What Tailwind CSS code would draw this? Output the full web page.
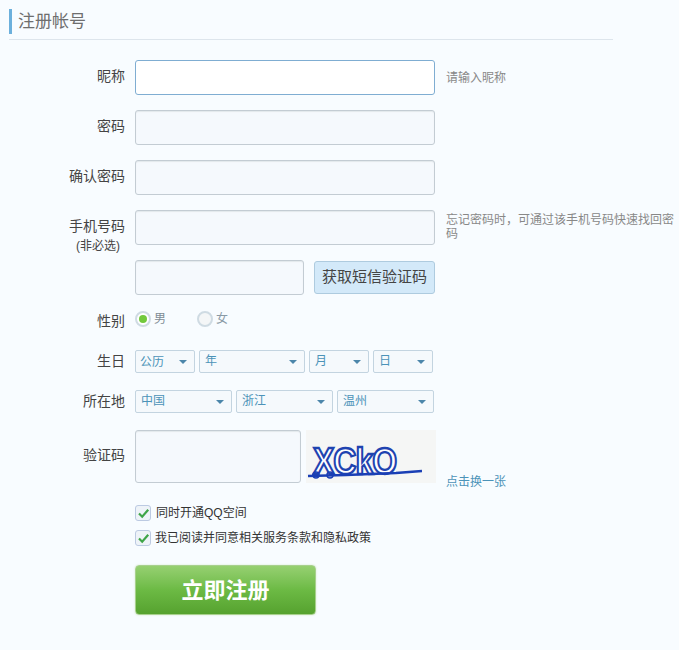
<!DOCTYPE html>
<html lang="zh-CN">
<head>
  <meta charset="UTF-8" />
  <title>注册帐号</title>
  <script src="https://cdn.jsdelivr.net/npm/@tailwindcss/browser@4"></script>
</head>
<body class="bg-[#f8fcff] w-[679px] h-[650px] overflow-hidden font-['Liberation_Sans','Noto_Sans_CJK_SC',sans-serif] text-[#444]">
  <div class="pt-[9px] pl-[9px] w-[613px]">
    <div class="border-l-[3px] border-[#6cb0dc] h-[25px] pl-[6px] text-[17px] leading-[25px] text-[#6e6e6e]">注册帐号</div>
    <div class="mt-[5px] h-px bg-[#dde5ec]"></div>
  </div>

  <div class="mt-[20px] flex flex-col">
    <!-- nickname -->
    <div class="flex h-[35px]">
      <label class="w-[125px] text-right text-[14px] leading-[33px] text-[#444]">昵称</label>
      <div class="ml-[10px] w-[300px] h-[35px] rounded-[3px] border border-[#7fadd2] bg-white"></div>
      <p class="ml-[11px] text-[12px] leading-[37px] text-[#888]">请输入昵称</p>
    </div>
    <div class="flex h-[35px] mt-[15px]">
      <label class="w-[125px] text-right text-[14px] leading-[33px]">密码</label>
      <div class="ml-[10px] w-[300px] h-[35px] rounded-[3px] border border-[#c3ccd3] bg-[#f5f9fd] shadow-[inset_0_1px_1px_#e3e8ec]"></div>
    </div>
    <div class="flex h-[35px] mt-[15px]">
      <label class="w-[125px] text-right text-[14px] leading-[33px]">确认密码</label>
      <div class="ml-[10px] w-[300px] h-[35px] rounded-[3px] border border-[#c3ccd3] bg-[#f5f9fd] shadow-[inset_0_1px_1px_#e3e8ec]"></div>
    </div>
    <!-- phone -->
    <div class="flex h-[35px] mt-[15px]">
      <div class="w-[125px] text-right">
        <div class="text-[14px] leading-[33px]">手机号码</div>
        <div class="-mt-[5px] text-[12px] leading-[16px] pr-[5px]">(非必选)</div>
      </div>
      <div class="ml-[10px] w-[300px] h-[35px] rounded-[3px] border border-[#c3ccd3] bg-[#f5f9fd] shadow-[inset_0_1px_1px_#e3e8ec]"></div>
      <p class="ml-[11px] mt-[3px] w-[232px] text-[12px] leading-[14px] text-[#888]">忘记密码时，可通过该手机号码快速找回密码</p>
    </div>
    <div class="flex h-[35px] mt-[15px] pl-[135px]">
      <div class="w-[169px] h-[35px] rounded-[3px] border border-[#c3ccd3] bg-[#f5f9fd] shadow-[inset_0_1px_1px_#e3e8ec]"></div>
      <button class="ml-[10px] mt-px w-[121px] h-[33px] rounded-[3px] border border-[#aecbdf] bg-[#d3e9f9] text-[15px] text-[#444]">获取短信验证码</button>
    </div>
    <!-- gender -->
    <div class="flex h-[20px] mt-[14px] items-center">
      <label class="w-[125px] text-right text-[14px] pt-[4px]">性别</label>
      <div class="ml-[10px] w-[16px] h-[16px] rounded-full border-2 border-[#cfdbe3] bg-white flex items-center justify-center">
        <div class="w-[8px] h-[8px] rounded-full bg-[#72c93c]"></div>
      </div>
      <span class="ml-[3px] text-[12px] text-[#7f8c95]">男</span>
      <div class="ml-[31px] w-[16px] h-[16px] rounded-full border-2 border-[#cfdbe3] bg-[#f4f6f7]"></div>
      <span class="ml-[3px] text-[12px] text-[#8a9aa6]">女</span>
    </div>
    <!-- birthday -->
    <div class="flex h-[23px] mt-[21px] items-center">
      <label class="w-[125px] text-right text-[14px]">生日</label>
      <div class="ml-[10px] flex gap-[4px]">
        <div class="w-[60px] h-[23px] relative rounded-[2px] border border-[#c3d4e0] bg-[#f5f9fc] pl-[4px] text-[12px] leading-[22px] text-[#4c93b8]">公历<span class="absolute right-[7px] top-[9px] w-0 h-0 border-x-[4px] border-x-transparent border-t-[4px] border-t-[#4c86aa]"></span></div>
        <div class="w-[106px] h-[23px] relative rounded-[2px] border border-[#c3d4e0] bg-[#f5f9fc] pl-[5px] text-[12px] leading-[20px] text-[#4c93b8]">年<span class="absolute right-[7px] top-[9px] w-0 h-0 border-x-[4px] border-x-transparent border-t-[4px] border-t-[#4c86aa]"></span></div>
        <div class="w-[60px] h-[23px] relative rounded-[2px] border border-[#c3d4e0] bg-[#f5f9fc] pl-[5px] text-[12px] leading-[20px] text-[#4c93b8]">月<span class="absolute right-[7px] top-[9px] w-0 h-0 border-x-[4px] border-x-transparent border-t-[4px] border-t-[#4c86aa]"></span></div>
        <div class="w-[60px] h-[23px] relative rounded-[2px] border border-[#c3d4e0] bg-[#f5f9fc] pl-[5px] text-[12px] leading-[20px] text-[#4c93b8]">日<span class="absolute right-[7px] top-[9px] w-0 h-0 border-x-[4px] border-x-transparent border-t-[4px] border-t-[#4c86aa]"></span></div>
      </div>
    </div>
    <!-- location -->
    <div class="flex h-[23px] mt-[17px] items-center">
      <label class="w-[125px] text-right text-[14px]">所在地</label>
      <div class="ml-[10px] flex gap-[4px]">
        <div class="w-[97px] h-[23px] relative rounded-[2px] border border-[#c3d4e0] bg-[#f5f9fc] pl-[5px] text-[12px] leading-[20px] text-[#4c93b8]">中国<span class="absolute right-[7px] top-[9px] w-0 h-0 border-x-[4px] border-x-transparent border-t-[4px] border-t-[#4c86aa]"></span></div>
        <div class="w-[97px] h-[23px] relative rounded-[2px] border border-[#c3d4e0] bg-[#f5f9fc] pl-[5px] text-[12px] leading-[20px] text-[#4c93b8]">浙江<span class="absolute right-[7px] top-[9px] w-0 h-0 border-x-[4px] border-x-transparent border-t-[4px] border-t-[#4c86aa]"></span></div>
        <div class="w-[97px] h-[23px] relative rounded-[2px] border border-[#c3d4e0] bg-[#f5f9fc] pl-[5px] text-[12px] leading-[20px] text-[#4c93b8]">温州<span class="absolute right-[7px] top-[9px] w-0 h-0 border-x-[4px] border-x-transparent border-t-[4px] border-t-[#4c86aa]"></span></div>
      </div>
    </div>
    <!-- captcha -->
    <div class="flex h-[53px] mt-[17px]">
      <label class="w-[125px] text-right text-[14px] leading-[50px]">验证码</label>
      <div class="ml-[10px] w-[166px] h-[53px] rounded-[3px] border border-[#c3ccd3] bg-[#f5f9fd] shadow-[inset_0_1px_1px_#e3e8ec]"></div>
      <div class="ml-[5px] w-[130px] h-[53px] bg-[#f5f6f5] relative overflow-hidden">
        <span class="absolute left-[7px] top-[13px] origin-top scale-y-115 font-['Liberation_Sans'] font-bold text-[32px] leading-[32px] tracking-[-1px] text-white [-webkit-text-stroke:2px_#1f43b0]">XCkO</span>
        <svg class="absolute left-0 top-0" width="130" height="53" viewBox="0 0 130 53">
          <path d="M2 46 L40 45 L90 43 L116 41" fill="none" stroke="#1a3fb5" stroke-width="2.5"/>
          <circle cx="10" cy="45" r="3" fill="none" stroke="#1a3fb5" stroke-width="1.5"/>
          <circle cx="24" cy="45" r="3" fill="none" stroke="#1a3fb5" stroke-width="1.5"/>
        </svg>
      </div>
      <a class="ml-[10px] mt-[44px] text-[12px] leading-[16px] text-[#4c93b8]">点击换一张</a>
    </div>
    <!-- checkboxes -->
    <div class="flex items-center h-[16px] mt-[22px] pl-[135px]">
      <div class="w-[16px] h-[16px] rounded-[3px] border border-[#bccae2] bg-[#eef3f8] flex items-center justify-center">
        <svg width="13" height="13" viewBox="0 0 13 13"><path d="M2 6.5l3.2 3.2 6-7" fill="none" stroke="#3fa548" stroke-width="2.2"/></svg>
      </div>
      <span class="ml-[5px] text-[12px] text-[#333]">同时开通QQ空间</span>
    </div>
    <div class="flex items-center h-[16px] mt-[9px] pl-[135px]">
      <div class="w-[16px] h-[16px] rounded-[3px] border border-[#bccae2] bg-[#eef3f8] flex items-center justify-center">
        <svg width="13" height="13" viewBox="0 0 13 13"><path d="M2 6.5l3.2 3.2 6-7" fill="none" stroke="#3fa548" stroke-width="2.2"/></svg>
      </div>
      <span class="ml-[4px] text-[12px] text-[#333]">我已阅读并同意相关服务条款和隐私政策</span>
    </div>
    <!-- submit -->
    <div class="pl-[135px] mt-[19px]">
      <button class="w-[181px] h-[50px] rounded-[4px] border border-[#a8d08d] bg-linear-to-b from-[#96d071] via-[#6cba44] to-[#56a22f] shadow-[0_0_2px_#cfe6c0] text-white text-[22px] font-bold">立即注册</button>
    </div>
  </div>
</body>
</html>
